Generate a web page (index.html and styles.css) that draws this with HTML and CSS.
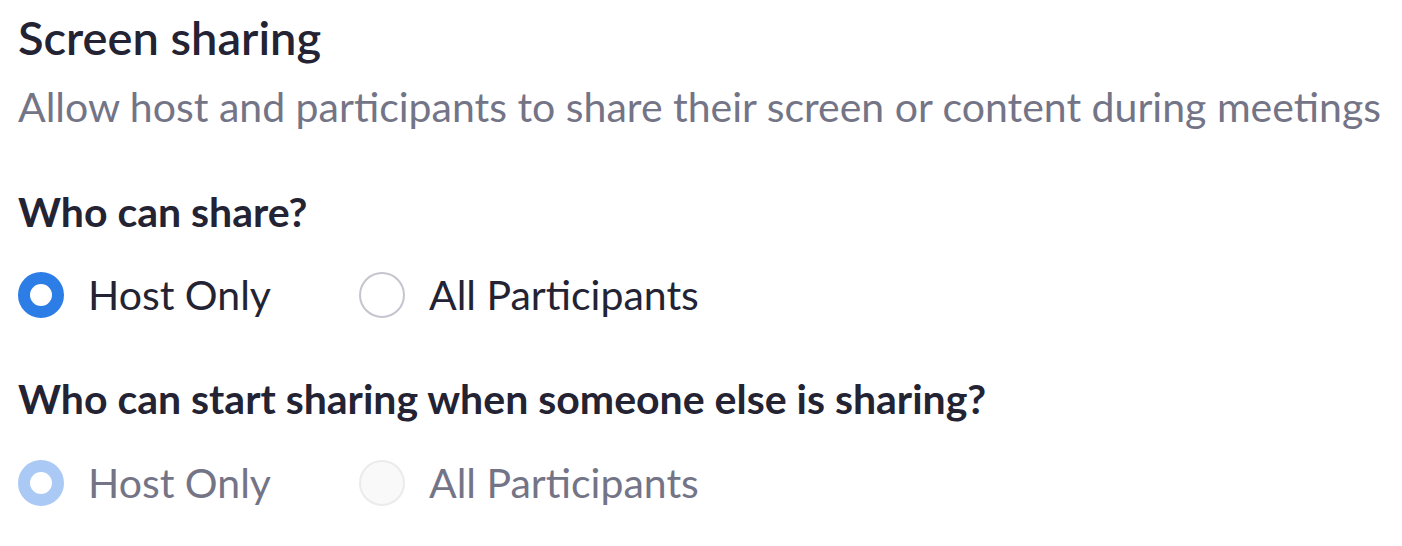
FILE: index.html
```html
<!DOCTYPE html>
<html>
<head>
<meta charset="utf-8">
<link rel="stylesheet" href="styles.css">
</head>
<body>
<section class="setting">
  <h1 class="title">Screen sharing</h1>
  <p class="desc">Allow host and participants to share their screen or content during meetings</p>
  <h2 class="question">Who can share?</h2>
  <div class="options">
    <label class="option"><span class="radio checked"></span><span class="label">Host Only</span></label>
    <label class="option"><span class="radio"></span><span class="label">All Participants</span></label>
  </div>
  <h2 class="question second">Who can start sharing when someone else is sharing?</h2>
  <div class="options disabled">
    <label class="option"><span class="radio checked"></span><span class="label">Host Only</span></label>
    <label class="option"><span class="radio"></span><span class="label">All Participants</span></label>
  </div>
</section>
</body>
</html>
```
FILE: styles.css
```css
html, body {
  margin: 0;
  padding: 0;
  background: #ffffff;
}
body {
  font-family: "Lato", "Liberation Sans", sans-serif;
  color: #232333;
}
.setting {
  padding: 9px 18px 0 18px;
}
.title {
  margin: 0;
  font-size: 47px;
  font-weight: 600;
  line-height: 56px;
  color: #232333;
}
.desc {
  margin: 17px 0 0 0;
  font-size: 41px;
  line-height: 50px;
  color: #747487;
}
.question {
  margin: 55px 0 0 0;
  font-size: 41px;
  font-weight: 700;
  line-height: 50px;
  color: #232333;
}
.question.second {
  margin-top: 56px;
}
.options {
  display: flex;
  align-items: center;
  gap: 88px;
  margin-top: 35px;
}
.options.disabled {
  margin-top: 36px;
}
.option {
  display: flex;
  align-items: center;
  gap: 24px;
  font-size: 41px;
  line-height: 46px;
  color: #232333;
}
.radio {
  box-sizing: border-box;
  flex: none;
  width: 46px;
  height: 46px;
  border-radius: 50%;
  border: 2px solid #c5c5cf;
  background: #fff;
}
.radio.checked {
  border: 12px solid #2d7de7;
}
.options.disabled .option {
  color: #747487;
}
.options.disabled .radio {
  border-color: #ebebee;
  background: #f9f9fa;
}
.options.disabled .radio.checked {
  border-color: #abc9f5;
  background: #fff;
}
```
